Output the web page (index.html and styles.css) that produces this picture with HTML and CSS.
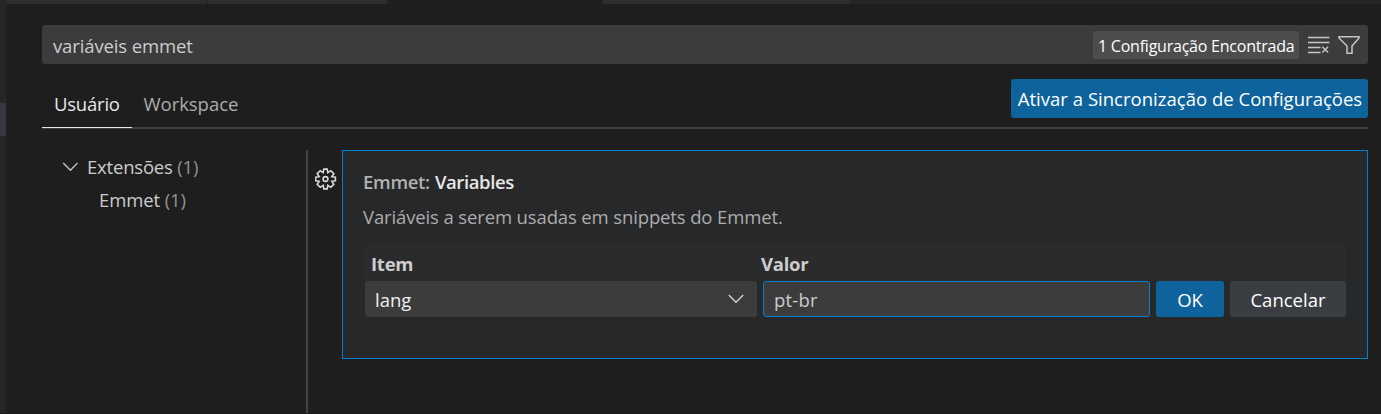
FILE: index.html
```html
<!DOCTYPE html>
<html lang="pt-BR">
<head>
<meta charset="utf-8">
<title>Configurações</title>
<link rel="stylesheet" href="styles.css">
</head>
<body>
<div class="window">
  <aside class="sidebar"><div class="sidebar-selection"></div></aside>
  <main class="editor">
    <div class="tabstrip"><i class="tab tab-a"></i><i class="tab tab-b"></i><i class="tab tab-active"></i><i class="tab tab-c"></i></div>
    <div class="settings">
      <div class="search">
        <span class="search-text"><span class="t t-search">variáveis emmet</span></span>
        <span class="badge"><span class="t t-badge">1 Configuração Encontrada</span></span>
        <svg class="icon-clear" width="22" height="18" viewBox="0 0 22 18" fill="none" stroke="#c5c5c5" stroke-width="1.4"><path d="M0 1.5h21.500M0 6.500h21.500M0 11.500h12.500M0 16.500h12.500M14.300 10.700l5.800 5.800M20.100 10.700l-5.800 5.800"/></svg>
        <svg class="icon-filter" width="22" height="20" viewBox="0 0 22 20" fill="none" stroke="#c5c5c5" stroke-width="1.5"><path d="M1 1.700h20v1.300l-7 8v7.300h-5v-7.300l-8-8z"/></svg>
      </div>
      <div class="header">
        <nav class="targets">
          <span class="target active"><span class="t t-user">Usuário</span></span>
          <span class="target"><span class="t t-work">Workspace</span></span>
        </nav>
        <button class="sync"><span class="t t-sync">Ativar a Sincronização de Configurações</span></button>
      </div>
      <div class="content">
        <div class="tree">
          <div class="tree-row"><svg class="chevron" width="16" height="10" viewBox="0 0 16 10" fill="none" stroke="#c5c5c5" stroke-width="1.4"><path d="M1.200 1l7.200 7.300L15.600 1"/></svg><span class="t t-ext">Extensões <span class="count">(1)</span></span></div>
          <div class="tree-row child"><span class="t t-emm">Emmet <span class="count">(1)</span></span></div>
        </div>
        <div class="gutter">
          <svg width="22" height="22" viewBox="-10.500 -11 22 22" fill="none" stroke="#d8d8d8" stroke-width="1.600" stroke-linejoin="miter"><path d="M-1.700-9.900H1.700L2.300-6.300 5.300-8.300 8.300-5.300 6.300-2.300 9.900-1.700V1.700L6.300 2.300 8.300 5.300 5.300 8.300 2.300 6.300 1.700 9.900H-1.700L-2.300 6.300-5.300 8.300-8.300 5.300-6.300 2.300-9.900 1.700V-1.700L-6.300-2.300-8.300-5.300-5.300-8.300-2.300-6.300Z"/><circle r="2.400"/></svg>
        </div>
        <section class="setting">
          <h3 class="title"><span class="t t-cat">Emmet:</span><span class="t t-name">Variables</span></h3>
          <p class="description"><span class="t t-desc">Variáveis a serem usadas em snippets do Emmet.</span></p>
          <div class="table-head"><b><span class="t t-item">Item</span></b><b><span class="t t-valor">Valor</span></b></div>
          <div class="table-row">
            <div class="select"><span class="t t-lang">lang</span><svg width="16" height="10" viewBox="0 0 16 10" fill="none" stroke="#d0d0d0" stroke-width="1.400"><path d="M.8 1l7.200 7.300L15.200 1"/></svg></div>
            <div class="input"><span class="t t-pt">pt-br</span></div>
            <button class="ok"><span class="t t-ok">OK</span></button>
            <button class="cancel"><span class="t t-can">Cancelar</span></button>
          </div>
        </section>
      </div>
    </div>
  </main>
</div>
</body>
</html>
```
FILE: styles.css
```css
* { box-sizing: border-box; margin: 0; }
body { background: #1e1e1e; color: #ccc; font: 18.5px/26px "Open Sans", "Noto Sans", sans-serif; overflow: hidden; }
button { border: 0; padding: 0; font: inherit; color: #fff; border-radius: 3px; }
svg { display: block; flex: none; }
.window { display: flex; height: 414px; border-bottom: 1px solid #1b191c; }
.t { white-space: nowrap; }
.t-search { letter-spacing: -.13px; }
.t-badge { letter-spacing: -.23px; }
.t-user { letter-spacing: -.22px; }
.t-work { margin-left: .5px; letter-spacing: -.04px; }
.t-sync { letter-spacing: .02px; margin-left: 1px; }
.t-ext { letter-spacing: -.2px; }
.t-emm { letter-spacing: -.1px; }
.t-cat { letter-spacing: -.3px; }
.t-name { letter-spacing: -.38px; }
.t-desc { letter-spacing: -.13px; }
.t-item { letter-spacing: -.25px; }
.t-valor { letter-spacing: -.25px; }
.t-pt { letter-spacing: .2px; }
.sidebar { width: 6px; padding-top: 103px; background: #252526; }
.sidebar-selection { height: 33px; background: #37373d; }
.editor { flex: 1; }
.tabstrip { display: flex; height: 4px; background: #252526; }
.tab { background: #2d2d2d; border-right: 1px solid #252526; }
.tab-a { width: 202px; }
.tab-b { width: 180px; }
.tab-active { width: 215px; background: #1e1e1e; }
.tab-c { width: 248px; }
.settings { padding: 21px 13px 0 36px; }
.search { display: flex; align-items: center; height: 39px; padding: 0 8px 0 11px; background: #3c3c3c; border-radius: 3px; }
.search-text { flex: 1; padding-top: 3px; }
.badge { width: 206px; height: 28px; padding-left: 5px; background: #4d4d4d; border-radius: 3px; color: #fff; font-size: 16px; line-height: 30px; }
.icon-clear { margin-left: 9px; }
.icon-filter { margin-left: 8px; }
.header { display: flex; justify-content: space-between; height: 65px; padding-top: 15px; border-bottom: 2px solid #414141; }
.targets { display: flex; margin-bottom: -1px; }
.target { padding: 12px 12px 0; color: #acacac; }
.target.active { width: 90px; margin-right: -1px; height: 49px; color: #e7e7e7; border-bottom: 1px solid #e7e7e7; }
.sync { width: 357px; height: 39px; background: #0e639c; }
.content { display: flex; height: 284px; padding-top: 21px; }
.tree { width: 266px; border-right: 2px solid #454545; }
.tree-row { display: flex; align-items: center; height: 33px; padding: 1px 0 0 20px; }
.chevron { margin-right: 9px; }
.child { padding-left: 57px; }
.count { color: #929292; }
.gutter { width: 34px; padding: 18px 0 0 7px; }
.setting { flex: 1; height: 209px; padding: 18px 21px 0 20px; background: #27282a; border: 1px solid #007fd4; }
.title { display: flex; gap: 5px; font-size: 18.5px; font-weight: 600; color: #e7e7e7; }
.t-cat { color: #b2b2b2; }
.description { margin-top: 9px; color: #acacac; }
.table-head { display: flex; height: 36px; margin: 15px 0 0 2px; padding: 6px; background: #2a2b2d; }
.table-head b { width: 390px; }
.table-row { display: flex; gap: 6px; height: 36px; margin-left: 2px; line-height: 38px; }
.select { display: flex; align-items: center; justify-content: space-between; width: 392px; padding: 0 13px 0 10px; background: #3c3c3c; border-radius: 3px; color: #f0f0f0; }
.t-lang { padding-top: 2px; }
.input { width: 387px; padding-left: 10px; line-height: 36px; background: #3c3c3c; border: 1px solid #007fd4; border-radius: 3px; }
.ok { width: 68px; background: #0e639c; }
.cancel { width: 116px; background: #3a3d41; }
```
